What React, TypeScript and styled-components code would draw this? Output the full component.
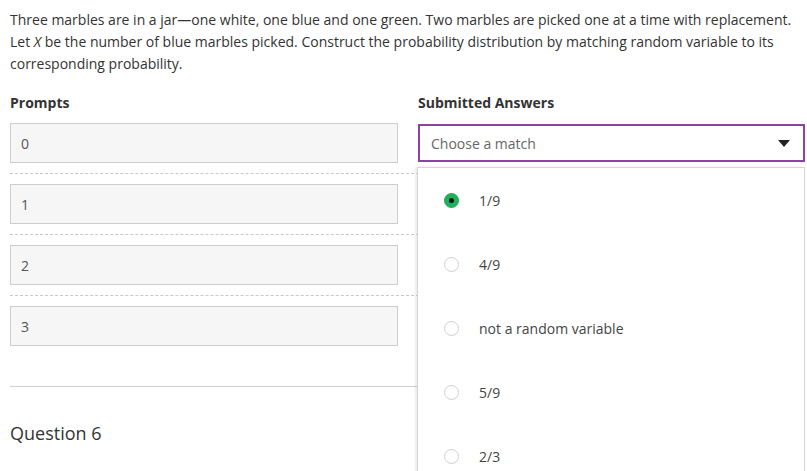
import React, { useState } from 'react';
import styled, { createGlobalStyle } from 'styled-components';

const GlobalStyle = createGlobalStyle`
  body {
    margin: 0;
    background: #fff;
    font-family: 'Open Sans', 'Noto Sans', sans-serif;
    color: #333;
  }
`;

const prompts = ['0', '1', '2', '3'];
const answers = ['1/9', '4/9', 'not a random variable', '5/9', '2/3'];

const App = () => {
    const [picked, setPicked] = useState(0);

    return (
        <Page>
            <GlobalStyle />
            <Question>
                Three marbles are in a jar—one white, one blue and one green. Two marbles are picked one at a time with replacement.
                Let <em>X</em> be the number of blue marbles picked. Construct the probability distribution by matching random variable to its
                corresponding probability.
            </Question>

            <Matching>
                <HeaderRow>
                    <ColumnTitle>Prompts</ColumnTitle>
                    <ColumnTitle>Submitted Answers</ColumnTitle>
                </HeaderRow>

                {prompts.map((p, i) => (
                    <PairRow key={p} last={i === prompts.length - 1}>
                        <PromptBox>{p}</PromptBox>
                        {i === 0 ? (
                            <SelectCell>
                                <Select>
                                    <span>Choose a match</span>
                                    <Caret />
                                </Select>
                                <Menu>
                                    {answers.map((a, j) => (
                                        <Option key={a} onClick={() => setPicked(j)}>
                                            <Radio checked={picked === j} />
                                            <span>{a}</span>
                                        </Option>
                                    ))}
                                </Menu>
                            </SelectCell>
                        ) : (
                            <div />
                        )}
                    </PairRow>
                ))}
            </Matching>

            <Divider />
            <NextTitle>Question 6</NextTitle>
        </Page>
    );
};

export default App;

const Page = styled.div`
    padding: 9px 2px 0 10px;
    height: 471px;
    box-sizing: border-box;
    overflow: hidden;
`

const Question = styled.p`
    margin: 0;
    font-size: 14px;
    line-height: 22px;
    color: #333;
    em {
        font-style: italic;
    }
`

const Matching = styled.div`
    display: flex;
    flex-direction: column;
    margin-top: 16px;
`

const HeaderRow = styled.div`
    display: grid;
    grid-template-columns: 388px 387px;
    column-gap: 20px;
    height: 22px;
    align-items: center;
`

const ColumnTitle = styled.div`
    font-size: 14px;
    font-weight: 700;
    color: #333;
`

const PairRow = styled.div<{ last?: boolean }>`
    display: grid;
    grid-template-columns: 388px 387px;
    column-gap: 20px;
    padding: 10px 0 ${p => (p.last ? '0' : '10px')};
    border-bottom: ${p => (p.last ? 'none' : '1px dashed #c8c8c8')};
    width: 795px;
`

const PromptBox = styled.div`
    height: 40px;
    box-sizing: border-box;
    border: 1px solid #cdcdcd;
    background: #f6f6f6;
    display: flex;
    align-items: center;
    padding-left: 10px;
    font-size: 14px;
    color: #555;
`

const SelectCell = styled.div`
    position: relative;
`

const Select = styled.div`
    height: 38px;
    margin-top: 1px;
    box-sizing: border-box;
    border: 2px solid #8f3fa6;
    background: #fff;
    display: flex;
    align-items: center;
    justify-content: space-between;
    padding: 0 13px 0 11px;
    font-size: 14px;
    color: #666;
`

const Caret = styled.span`
    width: 0;
    height: 0;
    border-left: 6px solid transparent;
    border-right: 6px solid transparent;
    border-top: 7px solid #222;
`

const Menu = styled.div`
    position: absolute;
    top: 44px;
    left: -1px;
    width: 388px;
    height: 330px;
    box-sizing: border-box;
    background: #fff;
    border: 1px solid #d6d6d6;
    border-bottom: none;
    box-shadow: -2px 0 2px rgba(0, 0, 0, 0.08);
    z-index: 2;
`

const Option = styled.div`
    height: 64px;
    display: flex;
    align-items: center;
    gap: 20px;
    padding-left: 26px;
    font-size: 14px;
    color: #444;
    cursor: pointer;
`

const Radio = styled.span<{ checked?: boolean }>`
    width: 15px;
    height: 15px;
    border-radius: 50%;
    box-sizing: border-box;
    border: 1px solid ${p => (p.checked ? '#1ea85a' : '#cfcfcf')};
    background: ${p => (p.checked ? '#20b05c' : '#fff')};
    display: flex;
    align-items: center;
    justify-content: center;
    &::after {
        content: '';
        width: 5px;
        height: 5px;
        border-radius: 50%;
        background: ${p => (p.checked ? '#111' : 'transparent')};
    }
`

const Divider = styled.hr`
    margin: 40px 0 0;
    width: 408px;
    border: none;
    border-top: 1px solid #cfcfcf;
`

const NextTitle = styled.h2`
    margin: 34px 0 0;
    font-size: 18px;
    font-weight: 400;
    color: #333;
    line-height: 24px;
`
